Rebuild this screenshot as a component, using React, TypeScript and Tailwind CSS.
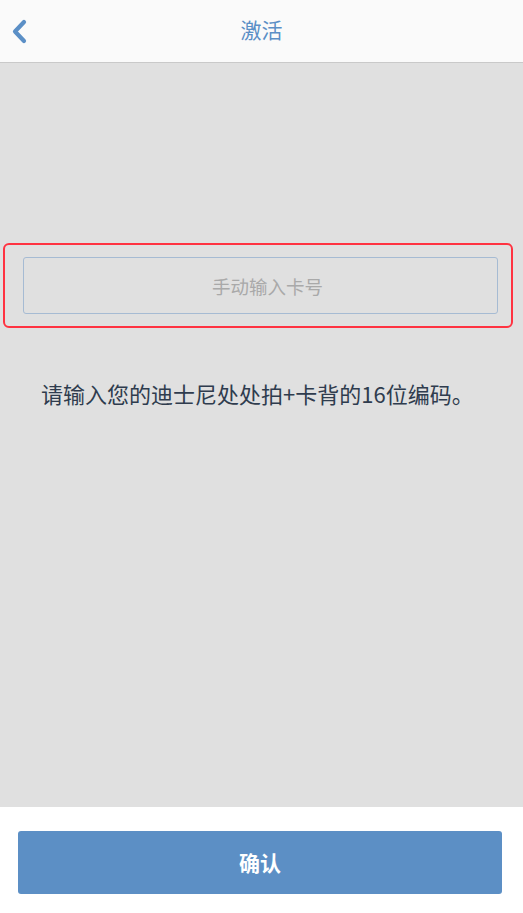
import React from 'react';

const font = { fontFamily: '"Noto Sans CJK SC", "Noto Sans", sans-serif' };

const App: React.FC = () => {
  const [code, setCode] = React.useState('');

  return (
    <div className="flex h-[913px] w-full flex-col bg-white" style={font}>
      <header className="relative flex h-[63px] shrink-0 items-center justify-center border-b border-[#c9c9c9] bg-[#fafafa] pb-[4px]">
        <button className="absolute left-[10px] top-[18px] p-0">
          <svg width="20" height="27" viewBox="0 0 20 27" fill="none">
            <path d="M14 4 L5 13.5 L14 23" stroke="#5b8fc6" strokeWidth="4.2" strokeLinecap="round" strokeLinejoin="round" />
          </svg>
        </button>
        <h1 className="text-[21px] leading-none text-[#5b8fc6]">激活</h1>
      </header>

      <main className="flex flex-1 flex-col bg-[#e0e0e0] pt-[180px]">
        <div className="mx-[3px] w-[510px] rounded-[6px] border-[2.5px] border-[#ff3341] py-[12px] pl-[18px] pr-[13px]">
          <input
            value={code}
            onChange={(e) => setCode(e.target.value)}
            placeholder="手动输入卡号"
            className="h-[57px] w-full rounded-[3px] border border-[#a6bbd3] bg-transparent pl-[14px] text-center text-[18.5px] text-[#333] outline-none placeholder:text-[#a9a9a9]"
          />
        </div>
        <p className="mt-[50px] pl-[41px] text-[22px] leading-[30px] text-[#2f3c4e]">
          请输入您的迪士尼处处拍+卡背的16位编码。
        </p>
      </main>

      <footer className="flex h-[106px] shrink-0 items-start bg-white pl-[18px] pr-[21px] pt-[24px]">
        <button className="flex h-[63px] w-full items-center justify-center rounded-[3px] bg-[#5c8fc5] text-[21px] font-bold text-white">
          确认
        </button>
      </footer>
    </div>
  );
};

export default App;
